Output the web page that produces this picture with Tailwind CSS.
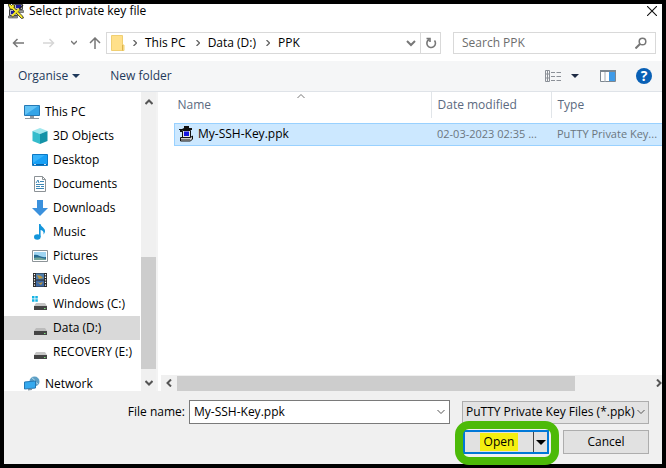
<!DOCTYPE html>
<html lang="en">
<head>
<meta charset="utf-8">
<meta name="viewport" content="width=device-width, initial-scale=1">
<title>Select private key file</title>
<script src="https://cdn.jsdelivr.net/npm/@tailwindcss/browser@4"></script>
</head>
<body class="bg-black font-['Open_Sans','Noto_Sans',sans-serif] text-xs text-black">
<main class="flex h-screen flex-col border-4 border-black bg-white">

  <header class="flex h-7 shrink-0 items-start justify-between pl-1 pr-[3px]">
    <div class="flex items-start gap-[5px]">
      <svg class="h-4 w-4" viewBox="0 0 16 16" aria-hidden="true">
        <path d="M6.500.5h8v5h-8zM1.500 5.500h8v6h-8z" fill="#b8b8c4" stroke="#444" />
        <path d="M8 1h5v3H8zM3 7h4v3H3z" fill="#1c1c9c"/>
        <path d="M.5 12h9v2h-9zM9.500 6.500h6v2h-6z" fill="#999" stroke="#444" stroke-width=".6"/>
        <path d="M0 0h2l1.500 1.500L5 0l1.500 2-.5 1.500 8.500 8.500 1 2-2 .5L4.500 5.500 2 5z" fill="#f5e829" stroke="#222" stroke-width=".8"/>
        <path d="M15 1L4 13" stroke="#222" stroke-width="1.200"/><path d="M11 5L4 12" stroke="#f5e829" stroke-width="2"/>
      </svg>
      <h1 class="leading-[14px]">Select private key file</h1>
    </div>
    <button type="button" aria-label="Close" class="p-0.5">
      <svg class="h-2.5 w-2.5" viewBox="0 0 10 10" fill="none" stroke="#111" stroke-width="1.1"><path d="M0 0l10 10M10 0L0 10"/></svg>
    </button>
  </header>

  <nav class="flex h-[22px] shrink-0 items-stretch gap-3 pr-1.5 pl-2">
    <div class="flex flex-1">
      <div class="flex w-[94px] items-center">
        <button type="button" aria-label="Back"><svg class="h-3 w-3" viewBox="0 0 12 12" fill="none" stroke="#777" stroke-width="1.5"><path d="M12 6H1.5M5.5 2l-4 4 4 4"/></svg></button>
        <button type="button" aria-label="Forward" class="ml-[19px]"><svg class="h-3 w-3" viewBox="0 0 12 12" fill="none" stroke="#d6d6d6" stroke-width="1.5"><path d="M0 6h10.500M6.500 2l4 4-4 4"/></svg></button>
        <button type="button" aria-label="Recent locations" class="ml-4"><svg class="h-1.5 w-1.5" viewBox="0 0 6 6" fill="none" stroke="#777" stroke-width="1.4"><path d="M0 1l3 3 3-3"/></svg></button>
        <button type="button" aria-label="Up" class="ml-3"><svg class="h-3 w-3" viewBox="0 0 12 12" fill="none" stroke="#777" stroke-width="1.5"><path d="M6 12V1.500M1 6l5-5 5 5"/></svg></button>
      </div>
      <div class="flex flex-1 items-center border border-[#d9d9d9] pl-1">
        <svg class="h-4 w-3.5" viewBox="0 0 14 16" aria-hidden="true"><path d="M.5.5h11v9.500h1.500v5.500H.5z" fill="#ffe08a" stroke="#f0cf72"/><path d="M11.500 10v5.500" stroke="#d9b34c"/></svg>
        <svg class="ml-2 h-1.5 w-1" viewBox="0 0 4 6" fill="none" stroke="#666" stroke-width="1.300"><path d="M.5 0l3 3-3 3"/></svg>
        <a href="#" class="ml-2">This PC</a>
        <svg class="ml-2.5 h-1.5 w-1" viewBox="0 0 4 6" fill="none" stroke="#666" stroke-width="1.300"><path d="M.5 0l3 3-3 3"/></svg>
        <a href="#" class="ml-2">Data (D:)</a>
        <svg class="ml-2.5 h-1.5 w-1" viewBox="0 0 4 6" fill="none" stroke="#666" stroke-width="1.300"><path d="M.5 0l3 3-3 3"/></svg>
        <a href="#" class="ml-2">PPK</a>
        <button type="button" aria-label="Previous locations" class="ml-auto mr-1"><svg class="h-2 w-2.5" viewBox="0 0 10 8" fill="none" stroke="#777" stroke-width="2"><path d="M1 2l4 4 4-4"/></svg></button>
        <button type="button" aria-label="Refresh" class="flex h-full w-5 items-center justify-center border-l border-[#d9d9d9]"><svg class="h-3 w-3" viewBox="0 0 12 12" fill="none" stroke="#777" stroke-width="1.600"><path d="M9.500 3.500A4.300 4.300 0 1 1 4 2.500M1.500 1.500H5V5"/></svg></button>
      </div>
    </div>
    <label class="flex w-[203px] items-center border border-[#d9d9d9] pr-2 pl-2">
      <input type="search" aria-label="Search PPK" placeholder="Search PPK" class="min-w-0 flex-1 outline-none placeholder:text-[#6d6d6d]">
      <svg class="h-3 w-3" viewBox="0 0 12 12" fill="none" stroke="#777" stroke-width="1.500" aria-hidden="true"><circle cx="7.500" cy="4.500" r="3.300"/><path d="M5 7L.5 11.500" stroke-width="2"/></svg>
    </label>
  </nav>

  <div class="mt-[7px] flex h-[31px] shrink-0 items-center border-b border-[#dfe3e8] bg-[#f5f6f7] pr-2.5 pl-3.5 text-[#1e395b]">
    <button type="button" class="flex items-center gap-1">Organise
      <svg class="h-1 w-2" viewBox="0 0 8 4" aria-hidden="true"><path d="M0 0h8L4 4z" fill="#1e395b"/></svg>
    </button>
    <button type="button" class="ml-[30px]">New folder</button>
    <button type="button" aria-label="Change your view" class="ml-auto flex items-center gap-2.5">
      <svg class="h-3.5 w-4" viewBox="0 0 16 14" fill="none" stroke="#8b9097"><path d="M.5 1.500h4v11h-4zM.5 5h4M.5 9h4M6 3.500h4M11.500 3.500h4.500M6 7.500h4M11.500 7.500h4.500M6 11.500h4M11.500 11.500h4.500M2.500 2v10"/></svg>
      <svg class="h-1 w-2" viewBox="0 0 8 4"><path d="M0 0h8L4 4z" fill="#1e2b45"/></svg>
    </button>
    <button type="button" aria-label="Show the preview pane" class="ml-[21px]">
      <svg class="h-3 w-4" viewBox="0 0 16 12"><path d="M.5.5h15v11H.5z" fill="#fff" stroke="#7d8790"/><path d="M0 0h16v2H0z" fill="#7d8790"/><path d="M5 2v10" stroke="#a5acb3"/><path d="M9 2h6v9H9z" fill="#3f9be8"/></svg>
    </button>
    <button type="button" aria-label="Get help" class="ml-5 flex h-4 w-4 items-center justify-center rounded-full bg-[#0960b5] text-sm leading-4 font-bold text-white">?</button>
  </div>

  <div class="flex min-h-0 flex-1">
    <aside class="flex w-[154px] shrink-0 border-r-2 border-[#f3f3f3]">
      <ul class="min-w-0 flex-1 overflow-hidden pt-2 whitespace-nowrap">
        <li><a href="#" class="flex h-6 items-center gap-[5px] pl-5">
          <svg class="h-4 w-4" viewBox="0 0 16 16"><path d="M.5 1.500h15v10H.5z" fill="#35a5e8" stroke="#2579b5"/><path d="M1 11V2h13z" fill="#62c3f5"/><path d="M6 12h4v2H6zM1 14h14v1H1z" fill="#90989f"/></svg>This PC</a></li>
        <li><a href="#" class="flex h-6 items-center gap-[5px] pl-7">
          <svg class="h-4 w-4" viewBox="0 0 16 16"><path d="M8 0l7.500 3L8 6 .5 3z" fill="#a1e8ee"/><path d="M.5 3L8 6v10L.5 13z" fill="#35bccc"/><path d="M15.500 3L8 6v10l7.500-3z" fill="#1492a7"/></svg>3D Objects</a></li>
        <li><a href="#" class="flex h-6 items-center gap-[5px] pl-7">
          <svg class="h-4 w-4" viewBox="0 0 16 16"><path d="M.5 2.500h15v11H.5z" fill="#18a0f5" stroke="#0c78c4"/><path d="M1 11V3h12z" fill="#37b3fb"/><path d="M1 12h14v1H1z" fill="#0763aa"/><path d="M2 12.500h2M12 12.500h2" stroke="#fff" stroke-width=".8"/></svg>Desktop</a></li>
        <li><a href="#" class="flex h-6 items-center gap-[5px] pl-7">
          <svg class="h-4 w-4" viewBox="0 0 16 16"><path d="M2.500.5h8l3 3v12h-11z" fill="#fff" stroke="#8c9296"/><path d="M10.500.5v3h3" fill="none" stroke="#8c9296"/><path d="M4 7l2-3 1 3M8 5.500h4M4 8.500h8M4 10.500h4M9 10.500h3M4 12.500h8" fill="none" stroke="#3d87b5"/></svg>Documents</a></li>
        <li><a href="#" class="flex h-6 items-center gap-[5px] pl-7">
          <svg class="h-4 w-4" viewBox="0 0 16 16"><path d="M5 0h6v8h5l-8 8-8-8h5z" fill="#3b91dd"/></svg>Downloads</a></li>
        <li><a href="#" class="flex h-6 items-center gap-[5px] pl-7">
          <svg class="h-4 w-4" viewBox="0 0 16 16"><ellipse cx="5.300" cy="13" rx="3.300" ry="2.700" fill="#1496db"/><path d="M7 0h1.500c.4 3 5 4 4.500 7.500-.2 1.300-1 2.500-1.500 3C12 8 11 6.500 8.600 6v7H7z" fill="#1496db"/></svg>Music</a></li>
        <li><a href="#" class="flex h-6 items-center gap-[5px] pl-7">
          <svg class="h-4 w-4" viewBox="0 0 16 16"><path d="M.5 2.500h15v11H.5z" fill="#fff" stroke="#8d9498"/><path d="M2 4h12v8H2z" fill="#9fd5f2"/><path d="M2 7c4-1 7 3 12 2v3H2z" fill="#246a91"/><path d="M2 10c4-1 8 0 12 1v1H2z" fill="#71a59a"/></svg>Pictures</a></li>
        <li><a href="#" class="flex h-6 items-center gap-[5px] pl-7">
          <svg class="h-4 w-4" viewBox="0 0 16 16"><path d="M1 1h14v14H1z" fill="#292929"/><path d="M4 1.500h8v6H4z" fill="#4e7eae"/><path d="M4 8.500h8v6H4z" fill="#3d69a5"/><path d="M5 3l4 1 2 2-4 1zM5 10l3 1 3-1-2 3z" fill="#bc963f"/><path d="M2.500 2v13M13.500 2v13" stroke="#fff" stroke-width="1.200" stroke-dasharray="1.300 1.300"/></svg>Videos</a></li>
        <li><a href="#" class="flex h-6 items-center gap-[5px] pl-7">
          <svg class="h-4 w-4" viewBox="0 0 16 16"><path d="M0 0h2.500v2.500H0zM3.300 0h2.500v2.500H3.300zM0 3.300h2.500v2.500H0zM3.300 3.300h2.500v2.500H3.300z" fill="#16b3e4"/><path d="M4 7h9l2 3H2z" fill="#c5c5c5"/><path d="M2 10h13v4H2z" fill="#444"/><path d="M12 12h1.500v1H12z" fill="#7fe37f"/></svg>Windows (C:)</a></li>
        <li><a href="#" aria-current="true" class="mr-px flex h-6 items-center gap-[5px] bg-[#d9d9d9] pl-7">
          <svg class="h-4 w-4" viewBox="0 0 16 16"><path d="M4 8h9l2 3H2z" fill="#bbb"/><path d="M2 11h13v4H2z" fill="#444"/><path d="M12 13h1.500v1H12z" fill="#7fe37f"/></svg>Data (D:)</a></li>
        <li><a href="#" class="flex h-6 items-center gap-[5px] pl-7">
          <svg class="h-4 w-4" viewBox="0 0 16 16"><path d="M4 8h9l2 3H2z" fill="#c5c5c5"/><path d="M2 11h13v4H2z" fill="#444"/><path d="M12 13h1.500v1H12z" fill="#7fe37f"/></svg>RECOVERY (E:)</a></li>
        <li class="mt-2"><a href="#" class="flex h-6 items-center gap-[5px] pl-5">
          <svg class="h-4 w-4" viewBox="0 0 16 16"><circle cx="10.500" cy="5.500" r="5" fill="#5d9fc5"/><path d="M8 2c3 1 2 4 6 6" stroke="#b7dff2" fill="none"/><path d="M.5 6l11-1v7l-11 1z" fill="#35a9ee" stroke="#2478b4"/><path d="M4 13l4-.5v1.500l-4 .5z" fill="#8195a3"/></svg>Network</a></li>
      </ul>
      <div class="flex w-[15px] flex-col items-center bg-[#f0f0f0]" aria-hidden="true">
        <svg class="mt-1.5 h-2 w-2" viewBox="0 0 8 8" fill="none" stroke="#555" stroke-width="2"><path d="M.5 6L4 2.500 7.500 6"/></svg>
        <div class="mt-auto h-28 w-full bg-[#cdcdcd]"></div>
        <svg class="mt-2.5 mb-1 h-2 w-2 shrink-0" viewBox="0 0 8 8" fill="none" stroke="#555" stroke-width="2"><path d="M.5 2L4 5.500 7.500 2"/></svg>
      </div>
    </aside>

    <section class="flex min-w-0 flex-1 flex-col">
      <div class="relative min-h-0 flex-1 pl-4">
        <svg class="absolute top-0.5 left-[139px] h-1 w-2" viewBox="0 0 8 4" fill="none" stroke="#777" aria-hidden="true"><path d="M.5 4L4 .5 7.500 4"/></svg>
        <table class="w-full table-fixed border-collapse text-left whitespace-nowrap">
          <colgroup><col><col class="w-[120px]"><col class="w-[111px]"></colgroup>
          <thead class="text-[#5b6a80]">
            <tr>
              <th scope="col" class="h-[26px] border-r border-[#e1e5e9] p-0 pl-[3px] font-normal">Name</th>
              <th scope="col" class="border-r border-[#e1e5e9] p-0 pl-1.5 font-normal">Date modified</th>
              <th scope="col" class="p-0 pl-1.5 font-normal">Type</th>
            </tr>
          </thead>
          <tbody class="text-[#6b7680]">
            <tr aria-hidden="true"><td colspan="3" class="h-[5px] p-0"></td></tr>
            <tr class="h-[22px] border border-r-0 border-[#99d1ff] bg-[#cce8ff]">
              <td class="p-0 pl-1 text-black"><span class="flex items-center gap-[3px]">
                <svg class="h-4 w-4" viewBox="0 0 16 16"><path d="M0 3h3l2-1V0h5v2h3v2H0zM1 4h2v2H1z" fill="#111"/><path d="M3.500 4.500h8v7h-8z" fill="#e4e4e4" stroke="#111"/><path d="M5 5.500h5V10H5z" fill="#1414e0"/><path d="M1.500 11.500h10l2-1.500v3l-2 2h-10z" fill="#ccc" stroke="#111"/><path d="M2 13.500h9" stroke="#777"/></svg>My-SSH-Key.ppk</span></td>
              <td class="p-0 pl-1.5 text-[11px]">02-03-2023 02:35 ...</td>
              <td class="p-0 pl-1.5 text-[11px]">PuTTY Private Key...</td>
            </tr>
          </tbody>
        </table>
      </div>
      <div class="ml-[3px] flex h-4 shrink-0 items-center bg-[#f0f0f0]" aria-hidden="true">
        <svg class="mx-1 h-2 w-2" viewBox="0 0 8 8" fill="none" stroke="#555" stroke-width="2"><path d="M6 .5L2.500 4 6 7.500"/></svg>
        <div class="h-[15px] w-[398px] shrink bg-[#cdcdcd]"></div>
        <svg class="ml-auto h-2 w-2" viewBox="0 0 8 8" fill="none" stroke="#555" stroke-width="2"><path d="M3 .5L6.500 4 3 7.500"/></svg>
      </div>
    </section>
  </div>

  <footer class="flex h-[73px] shrink-0 flex-col gap-1.5 bg-[#f0f0f0] pt-[9px] pr-[13px]">
    <div class="flex items-center">
      <label for="file-name" class="w-[185px] shrink-0 pr-1 text-right">File name:</label>
      <div class="flex h-6 flex-1 items-center border border-[#7a7a7a] bg-white pr-1 pl-1">
        <input id="file-name" type="text" value="My-SSH-Key.ppk" class="min-w-0 flex-1 outline-none">
        <svg class="h-1.5 w-2" viewBox="0 0 8 6" fill="none" stroke="#555" aria-hidden="true"><path d="M.5 1L4 4.500 7.500 1"/></svg>
      </div>
      <div class="ml-3 grid w-[187px] items-center">
        <select aria-label="File type" class="col-start-1 row-start-1 h-[23px] appearance-none border border-[#adadad] bg-[#e3e3e3] pl-[3px] outline-none"><option>PuTTY Private Key Files (*.ppk)</option></select>
        <svg class="pointer-events-none col-start-1 row-start-1 mr-1 h-1.5 w-2 justify-self-end" viewBox="0 0 8 6" fill="none" stroke="#555" aria-hidden="true"><path d="M.5 1L4 4.500 7.500 1"/></svg>
      </div>
    </div>
    <div class="flex justify-end gap-3.5">
      <div class="relative flex h-6 w-[86px] border-2 border-[#0078d7] bg-[#e1e1e1]">
        <button type="button" class="flex flex-1 items-center justify-center"><span class="bg-[#f4ef10] px-1 leading-[18px]">Open</span></button>
        <button type="button" aria-label="More open options" class="flex w-3.5 items-center justify-center border-l border-[#444]">
          <svg class="h-[5px] w-2.5" viewBox="0 0 10 5"><path d="M0 0h10L5 5z" fill="#000"/></svg>
        </button>
        <div class="pointer-events-none absolute -top-[11px] -right-3 -bottom-[13px] -left-2.5 rounded-[14px] border-8 border-[#4cba08]"></div>
      </div>
      <button type="button" class="h-6 w-[86px] border border-[#adadad] bg-[#e1e1e1]">Cancel</button>
    </div>
  </footer>
</main>
</body>
</html>
